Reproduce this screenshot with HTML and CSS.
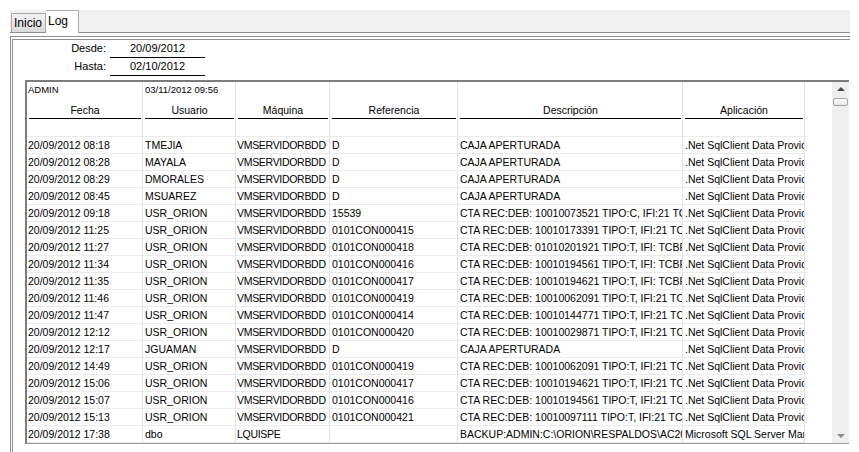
FILE: index.html
```html
<!DOCTYPE html>
<html lang="es">

<head>
  <meta charset="UTF-8">
  <meta name="viewport" content="width=device-width, initial-scale=1.0">
  <title>Log</title>
  <link rel="stylesheet" href="styles.css">
</head>

<body>
  <nav class="tabs">
    <div class="tab">Inicio</div>
    <div class="tab active">Log</div>
  </nav>

  <main class="panel">
    <div class="range">
      <label>Desde:</label>
      <span class="date">20/09/2012</span>
      <label>Hasta:</label>
      <span class="date">02/10/2012</span>
    </div>

    <section class="grid">
      <table class="log">
        <colgroup>
          <col style="width:116px">
          <col style="width:93px">
          <col style="width:94px">
          <col style="width:128px">
          <col style="width:225px">
          <col style="width:122px">
        </colgroup>
        <thead>
          <tr class="meta">
            <td>ADMIN</td>
            <td>03/11/2012 09:56</td>
            <td></td><td></td><td></td><td></td>
          </tr>
          <tr class="heads">
            <th><span>Fecha</span></th>
            <th><span>Usuario</span></th>
            <th><span>Máquina</span></th>
            <th><span>Referencia</span></th>
            <th><span>Descripción</span></th>
            <th><span>Aplicación</span></th>
          </tr>
        </thead>
        <tbody>
          <tr class="blank"><td></td><td></td><td></td><td></td><td></td><td></td></tr>
          <tr><td>20/09/2012 08:18</td><td>TMEJIA</td><td>VMSERVIDORBDD</td><td>D</td><td>CAJA APERTURADA</td><td>.Net SqlClient Data Provider</td></tr>
          <tr><td>20/09/2012 08:28</td><td>MAYALA</td><td>VMSERVIDORBDD</td><td>D</td><td>CAJA APERTURADA</td><td>.Net SqlClient Data Provider</td></tr>
          <tr><td>20/09/2012 08:29</td><td>DMORALES</td><td>VMSERVIDORBDD</td><td>D</td><td>CAJA APERTURADA</td><td>.Net SqlClient Data Provider</td></tr>
          <tr><td>20/09/2012 08:45</td><td>MSUAREZ</td><td>VMSERVIDORBDD</td><td>D</td><td>CAJA APERTURADA</td><td>.Net SqlClient Data Provider</td></tr>
          <tr><td>20/09/2012 09:18</td><td>USR_ORION</td><td>VMSERVIDORBDD</td><td>15539</td><td>CTA REC:DEB: 10010073521 TIPO:C, IFI:21 TC</td><td>.Net SqlClient Data Provider</td></tr>
          <tr><td>20/09/2012 11:25</td><td>USR_ORION</td><td>VMSERVIDORBDD</td><td>0101CON000415</td><td>CTA REC:DEB: 10010173391 TIPO:T, IFI:21 TCI</td><td>.Net SqlClient Data Provider</td></tr>
          <tr><td>20/09/2012 11:27</td><td>USR_ORION</td><td>VMSERVIDORBDD</td><td>0101CON000418</td><td>CTA REC:DEB: 01010201921 TIPO:T, IFI: TCBR</td><td>.Net SqlClient Data Provider</td></tr>
          <tr><td>20/09/2012 11:34</td><td>USR_ORION</td><td>VMSERVIDORBDD</td><td>0101CON000416</td><td>CTA REC:DEB: 10010194561 TIPO:T, IFI: TCBR</td><td>.Net SqlClient Data Provider</td></tr>
          <tr><td>20/09/2012 11:35</td><td>USR_ORION</td><td>VMSERVIDORBDD</td><td>0101CON000417</td><td>CTA REC:DEB: 10010194621 TIPO:T, IFI: TCBR</td><td>.Net SqlClient Data Provider</td></tr>
          <tr><td>20/09/2012 11:46</td><td>USR_ORION</td><td>VMSERVIDORBDD</td><td>0101CON000419</td><td>CTA REC:DEB: 10010062091 TIPO:T, IFI:21 TCI</td><td>.Net SqlClient Data Provider</td></tr>
          <tr><td>20/09/2012 11:47</td><td>USR_ORION</td><td>VMSERVIDORBDD</td><td>0101CON000414</td><td>CTA REC:DEB: 10010144771 TIPO:T, IFI:21 TCI</td><td>.Net SqlClient Data Provider</td></tr>
          <tr><td>20/09/2012 12:12</td><td>USR_ORION</td><td>VMSERVIDORBDD</td><td>0101CON000420</td><td>CTA REC:DEB: 10010029871 TIPO:T, IFI:21 TCI</td><td>.Net SqlClient Data Provider</td></tr>
          <tr><td>20/09/2012 12:17</td><td>JGUAMAN</td><td>VMSERVIDORBDD</td><td>D</td><td>CAJA APERTURADA</td><td>.Net SqlClient Data Provider</td></tr>
          <tr><td>20/09/2012 14:49</td><td>USR_ORION</td><td>VMSERVIDORBDD</td><td>0101CON000419</td><td>CTA REC:DEB: 10010062091 TIPO:T, IFI:21 TCI</td><td>.Net SqlClient Data Provider</td></tr>
          <tr><td>20/09/2012 15:06</td><td>USR_ORION</td><td>VMSERVIDORBDD</td><td>0101CON000417</td><td>CTA REC:DEB: 10010194621 TIPO:T, IFI:21 TCI</td><td>.Net SqlClient Data Provider</td></tr>
          <tr><td>20/09/2012 15:07</td><td>USR_ORION</td><td>VMSERVIDORBDD</td><td>0101CON000416</td><td>CTA REC:DEB: 10010194561 TIPO:T, IFI:21 TCI</td><td>.Net SqlClient Data Provider</td></tr>
          <tr><td>20/09/2012 15:13</td><td>USR_ORION</td><td>VMSERVIDORBDD</td><td>0101CON000421</td><td>CTA REC:DEB: 10010097111 TIPO:T, IFI:21 TCI</td><td>.Net SqlClient Data Provider</td></tr>
          <tr><td>20/09/2012 17:38</td><td>dbo</td><td>LQUISPE</td><td></td><td>BACKUP:ADMIN:C:\ORION\RESPALDOS\AC2012</td><td>Microsoft SQL Server Management Studio</td></tr>
        </tbody>
      </table>

      <div class="filler"></div>

      <div class="scroll">
        <span class="arrow-up"></span>
        <span class="thumb"></span>
        <span class="track"></span>
        <span class="arrow-down"></span>
      </div>
    </section>
  </main>
</body>

</html>
```

FILE: styles.css
```css
*,
html {
  margin: 0;
  padding: 0;
  box-sizing: border-box;
}

body {
  font-family: "Liberation Sans", Arial, sans-serif;
  font-size: 11px;
  color: #000;
  background: #fff;
  width: 859px;
  height: 452px;
  overflow: hidden;
}

/* pestañas */
.tabs {
  display: flex;
  align-items: flex-end;
  height: 23px;
  margin: 10px 9px 0 10px;
  padding-left: 1px;
  background: #f0f0f0;
  border-bottom: 1px solid #8e8e8e;
}

.tab {
  height: 19px;
  padding: 0 3px 0 2px;
  font-size: 12px;
  line-height: 18px;
  background: linear-gradient(#f3f3f3, #dadada);
  border: 1px solid #a9a9a9;
  border-bottom: none;
}

.tab.active {
  height: 23px;
  margin-bottom: -1px;
  padding: 0 10px 0 2px;
  line-height: 20px;
  background: #fff;
  border-left: none;
}

/* panel del log */
.panel {
  height: 420px;
  margin: 3px 9px 0 10px;
  border-top: 4px double #8e8e8e;
  border-left: 3px double #8e8e8e;
}

.range {
  display: grid;
  grid-template-columns: 93px 95px;
  column-gap: 4px;
}

.range label {
  text-align: right;
  line-height: 17px;
}

.range .date {
  padding-left: 20px;
  line-height: 17px;
  border-bottom: 1px solid #000;
}

.grid {
  display: flex;
  width: 824px;
  height: 364px;
  margin: 4px 0 0 12px;
  border-top: 2px solid #7c7c7c;
  border-left: 2px solid #7c7c7c;
  border-bottom: 1px solid #9a9a9a;
  overflow: hidden;
}

.log {
  table-layout: fixed;
  width: 778px;
  flex: none;
  border-spacing: 0;
  align-self: flex-start;
}

.log td,
.log th {
  padding: 0 1px 0 2px;
  font-size: 10.5px;
  font-weight: normal;
  line-height: 16px;
  text-align: left;
  white-space: nowrap;
  overflow: hidden;
  border-right: 1px solid #e2e2e2;
}

.log td:first-child {
  padding-left: 1px;
}

/* la columna Máquina va algo más apretada */
.log tbody td:nth-child(3) {
  padding-left: 1px;
  letter-spacing: -0.3px;
}

.log tbody td {
  border-bottom: 1px solid #ebebeb;
}

.meta td {
  height: 15px;
  font-size: 9.5px;
  line-height: 15px;
}

.heads th {
  height: 22px;
  padding: 6px 1px 0 2px;
}

.heads span {
  display: block;
  text-align: center;
  line-height: 15px;
  border-bottom: 1px solid #000;
}

.log .blank td {
  height: 18px;
}

.filler {
  width: 27px;
  flex: none;
}

/* barra de desplazamiento */
.scroll {
  display: flex;
  flex-direction: column;
  align-items: center;
  width: 17px;
  flex: none;
  background: #efefef;
}

.arrow-up {
  margin-top: 5px;
  border-left: 4px solid transparent;
  border-right: 4px solid transparent;
  border-bottom: 4px solid #4a4a4a;
}

.thumb {
  width: 15px;
  height: 8px;
  margin-top: 7px;
  border: 1px solid #a5a5a5;
  border-radius: 2px;
  background: linear-gradient(#fdfdfd, #e6e6e6);
}

.track {
  flex: 1;
}

.arrow-down {
  margin-bottom: 5px;
  border-left: 4px solid transparent;
  border-right: 4px solid transparent;
  border-top: 4px solid #8a8a8a;
}
```
